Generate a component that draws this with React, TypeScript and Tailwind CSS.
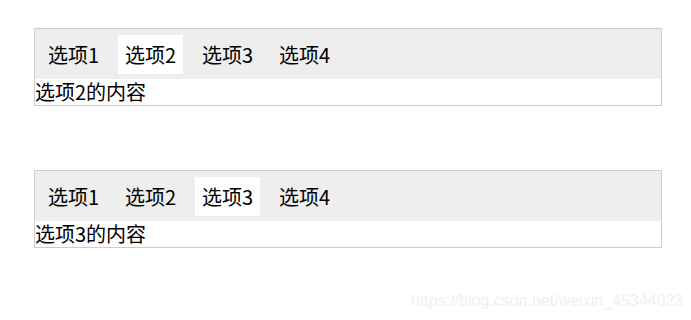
import { useState } from "react";

const tabs = ["选项1", "选项2", "选项3", "选项4"];

function TabBox({ initial }: { initial: number }) {
  const [active, setActive] = useState(initial);

  return (
    <div className="w-[628px] border border-[#cccccc] bg-white">
      <div className="flex h-[50px] gap-[12px] bg-[#eeeeee] pl-[6px] pt-[6px]">
        {tabs.map((t, i) => (
          <button
            key={t}
            type="button"
            onClick={() => setActive(i)}
            className={`flex h-[39px] w-[65px] items-center justify-center text-[20px] leading-[26px] text-black ${
              i === active ? "bg-white" : "bg-transparent"
            }`}
          >
            {t}
          </button>
        ))}
      </div>
      <div className="h-[26px] text-[20px] leading-[26px] text-black">{tabs[active]}的内容</div>
    </div>
  );
}

export default function App() {
  return (
    <div
      className="relative h-[320px] w-[691px] overflow-hidden bg-white pl-[34px] pt-[28px]"
      style={{ fontFamily: '"Noto Sans CJK SC", "Noto Sans", sans-serif' }}
    >
      <div className="flex flex-col gap-[64px]">
        <TabBox initial={1} />
        <TabBox initial={2} />
      </div>
      <div
        className="pointer-events-none absolute left-[411px] top-[291px] text-[16px] leading-[20px] text-[#f0f0f0]"
        style={{ fontFamily: '"Liberation Sans", Arial, sans-serif' }}
      >
        https://blog.csdn.net/weixin_45344023
      </div>
    </div>
  );
}
